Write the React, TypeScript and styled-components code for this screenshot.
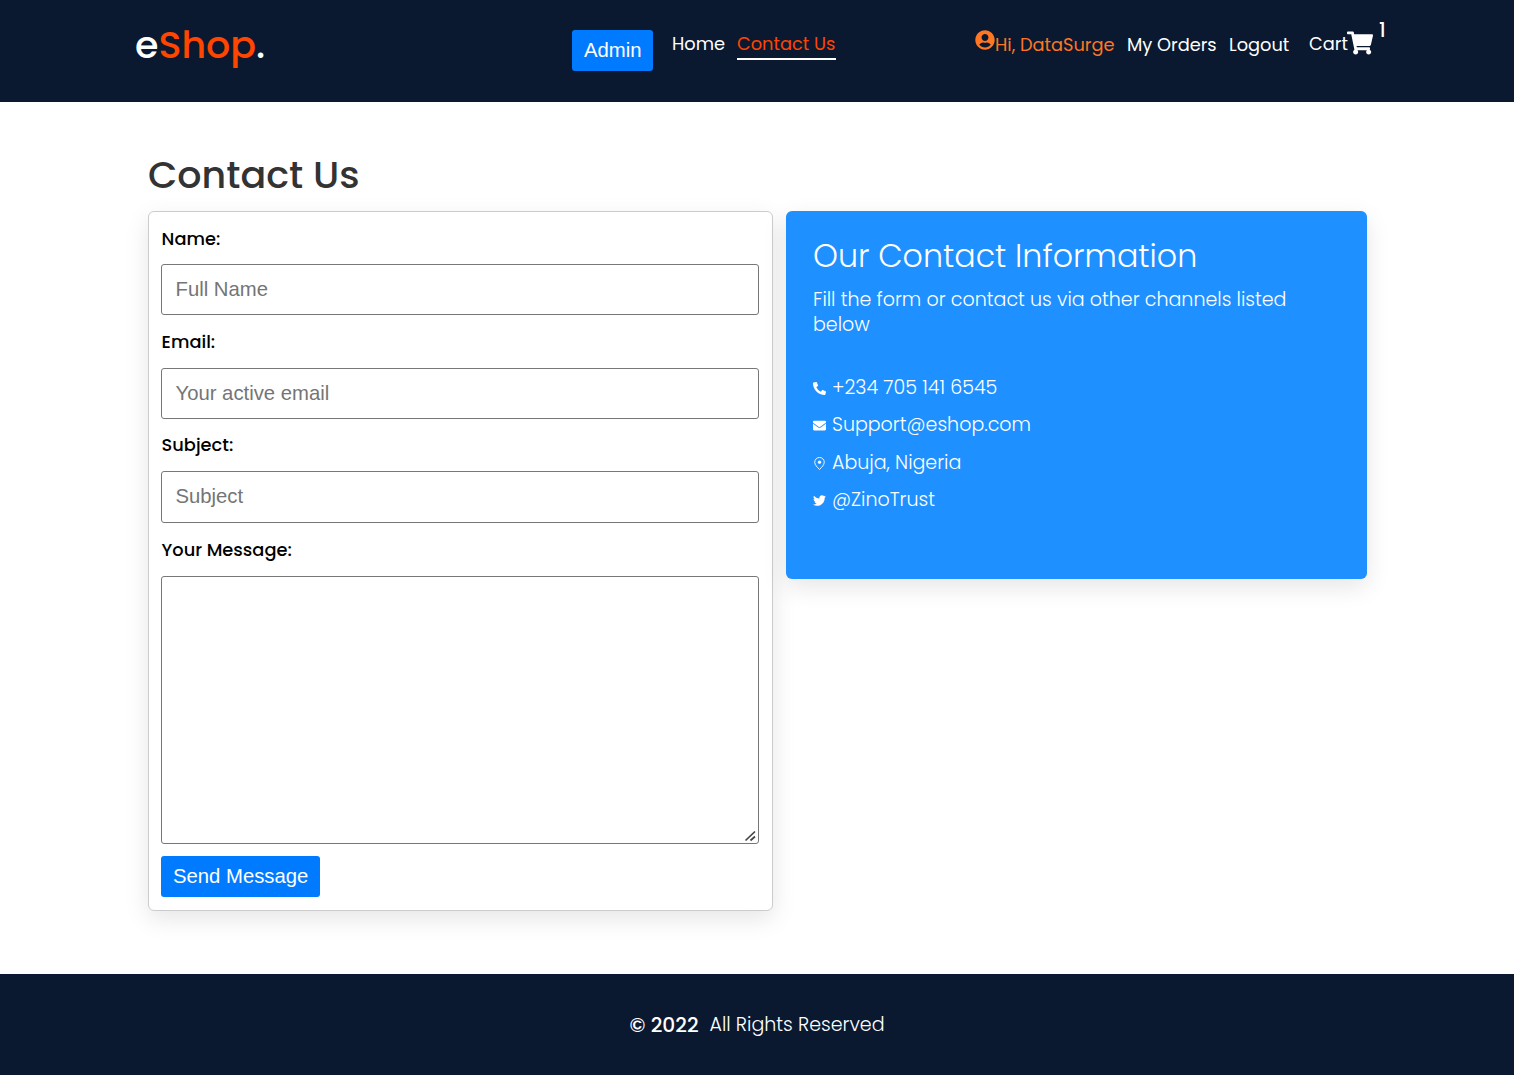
import React from "react";
import styled, { createGlobalStyle } from "styled-components";
import { FaShoppingCart, FaUserCircle, FaPhoneAlt, FaEnvelope, FaTwitter } from "react-icons/fa";

const GlobalStyle = createGlobalStyle`
  *, *::before, *::after { box-sizing: border-box; margin: 0; padding: 0; }
  body { margin: 0; background: #fff; font-family: Poppins, Inter, "Open Sans", sans-serif; }
  a { color: inherit; text-decoration: none; }
`;

const Page = styled.div`
  display: flex;
  flex-direction: column;
  height: 1075px;
`;

const Header = styled.header`
  display: flex;
  align-items: flex-start;
  height: 102px;
  padding: 20px 128px 0 135px;
  background: #0a1930;
  color: #fff;
  flex: none;
`;

const Label = styled.span<{ $size: number; $weight?: number }>`
  font-size: ${(p) => p.$size}px;
  font-weight: ${(p) => p.$weight ?? 400};
  white-space: nowrap;
`;

const Logo = styled.a`
  width: 437px;
  font-size: 38px;
  font-weight: 500;
  line-height: 49px;
  span { color: #ff4500; }
`;

const Button = styled.button`
  height: 41px;
  padding: 0 12px 1px;
  border: 0;
  border-radius: 3px;
  background: #007bff;
  color: #fff;
  font: 400 20.3px/39px "Liberation Sans", Arial, sans-serif;
  white-space: nowrap;
`;

const AdminButton = styled(Button)`
  width: 81px;
  margin: 10px 19px 0 0;
`;

const Nav = styled.nav`
  display: flex;
  gap: 13px;
  width: 303px;
  padding-top: 10px;
`;

const NavLink = styled.a<{ $width: number; $active?: boolean }>`
  width: ${(p) => p.$width}px;
  height: 30px;
  line-height: 28px;
  color: ${(p) => (p.$active ? "#ff4500" : "#fff")};
  border-bottom: 2px solid ${(p) => (p.$active ? "#fff" : "transparent")};
`;

const Account = styled.div`
  display: flex;
  align-items: flex-start;
`;

const AccountLink = styled.a<{ $width: number; $accent?: boolean }>`
  display: flex;
  width: ${(p) => p.$width}px;
  padding-top: 10px;
  line-height: 30px;
  color: ${(p) => (p.$accent ? "#ff7722" : "#fff")};
  svg { flex: none; }
`;

const CartLink = styled.a`
  display: flex;
  padding-top: 10px;
  line-height: 28px;
  svg { flex: none; }
`;

const CartText = styled.span`
  width: 38px;
`;

const CartCount = styled.span`
  margin: -10px 0 0 6px;
  line-height: 22px;
  font-size: 19px;
  font-weight: 500;
`;

const Main = styled.main`
  flex: 1;
  padding: 48px 147px 0 148px;
`;

const Title = styled.h2`
  height: 61px;
  line-height: 50px;
  font-size: 38px;
  font-weight: 500;
  color: #333;
`;

const Columns = styled.div`
  display: flex;
  align-items: flex-start;
  gap: 13px;
`;

const FormCard = styled.form`
  display: flex;
  flex-direction: column;
  align-items: flex-start;
  width: 625px;
  height: 700px;
  padding: 12px;
  background: #fff;
  border: 1px solid #ccc;
  border-radius: 6px;
  box-shadow: 0 8px 24px rgba(0, 0, 0, 0.1);
`;

const FieldLabel = styled.label<{ $height: number; $line?: number }>`
  height: ${(p) => p.$height}px;
  padding-left: 0.6px;
  line-height: ${(p) => p.$line ?? 30}px;
  font-size: 17.8px;
  font-weight: 500;
  color: #000;
`;

const Input = styled.input<{ $height: number }>`
  width: 598px;
  height: ${(p) => p.$height}px;
  margin-bottom: 12px;
  padding: 0 13.5px 1px;
  border: 1px solid #777;
  border-radius: 3px;
  font: 400 20.3px "Liberation Sans", Arial, sans-serif;
  &::placeholder { color: #757575; }
`;

const MessageBox = styled.div`
  position: relative;
  width: 598px;
  height: 268px;
  margin-bottom: 12px;
  flex: none;
`;

const TextArea = styled.textarea`
  display: block;
  width: 100%;
  height: 100%;
  border: 1px solid #777;
  border-radius: 3px;
  resize: none;
`;

const Grip = styled.svg`
  position: absolute;
  right: 3px;
  bottom: 2px;
  pointer-events: none;
`;

const InfoCard = styled.section`
  width: 581px;
  height: 368px;
  padding: 24px 27px;
  background: #1e90ff;
  color: #fff;
  border-radius: 6px;
  box-shadow: 0 8px 24px rgba(0, 0, 0, 0.1);
`;

const InfoTitle = styled.h3`
  line-height: 42px;
  font-size: 31.7px;
  font-weight: 300;
  white-space: nowrap;
`;

const InfoText = styled.p`
  margin: 10px 0 31.8px;
  line-height: 25px;
  font-size: 19.05px;
  font-weight: 300;
`;

const Channels = styled.div`
  display: flex;
  flex-direction: column;
`;

const Channel = styled.p`
  display: flex;
  align-items: center;
  gap: 6px;
  height: 37.4px;
  svg { position: relative; top: 1px; flex: none; }
`;

const Footer = styled.footer`
  display: flex;
  justify-content: center;
  gap: 11px;
  height: 101px;
  line-height: 101px;
  background: #0a1930;
  color: #fff;
  flex: none;
`;

const Copyright = styled(Label)`
  line-height: 102px;
`;

function PinIcon({ size }: { size: number }) {
  return (
    <svg width={size} height={size} viewBox="0 0 24 24" fill="none" stroke="currentColor" strokeWidth="1.7">
      <path d="M12 23C8 18.8 3.2 14.8 3.2 9.6a8.8 8.8 0 0 1 17.6 0C20.8 14.8 16 18.8 12 23z" />
      <circle cx="12" cy="9.5" r="3" fill="currentColor" stroke="none" />
    </svg>
  );
}

const fields = [
  { label: "Name:", hint: "Full Name", labelHeight: 40, line: 30, height: 51 },
  { label: "Email:", hint: "Your active email", labelHeight: 41, line: 30, height: 51 },
  { label: "Subject:", hint: "Subject", labelHeight: 40, line: 28, height: 52 },
];

const channels = [
  { Icon: FaPhoneAlt, text: "+234 705 141 6545" },
  { Icon: FaEnvelope, text: "Support@eshop.com" },
  { Icon: PinIcon, text: "Abuja, Nigeria" },
  { Icon: FaTwitter, text: "@ZinoTrust" },
];

export default function App() {
  return (
    <Page>
      <GlobalStyle />
      <Header>
        <Logo href="#">e<span>Shop</span>.</Logo>
        <AdminButton>Admin</AdminButton>
        <Nav>
          <NavLink href="#" $width={52}><Label $size={17.8}>Home</Label></NavLink>
          <NavLink href="#" $width={99} $active><Label $size={17.8}>Contact Us</Label></NavLink>
        </Nav>
        <Account>
          <AccountLink href="#" $width={152} $accent>
            <FaUserCircle size={20} />
            <Label $size={17.8}>Hi, DataSurge</Label>
          </AccountLink>
          <AccountLink href="#" $width={102}><Label $size={17.8}>My Orders</Label></AccountLink>
          <AccountLink href="#" $width={80}><Label $size={17.8}>Logout</Label></AccountLink>
          <CartLink href="#">
            <CartText><Label $size={17.8}>Cart</Label></CartText>
            <FaShoppingCart size={26} />
            <CartCount>1</CartCount>
          </CartLink>
        </Account>
      </Header>
      <Main>
        <Title>Contact Us</Title>
        <Columns>
          <FormCard>
            {fields.map((f) => (
              <React.Fragment key={f.label}>
                <FieldLabel $height={f.labelHeight} $line={f.line}>{f.label}</FieldLabel>
                <Input placeholder={f.hint} $height={f.height} />
              </React.Fragment>
            ))}
            <FieldLabel $height={41}>Your Message:</FieldLabel>
            <MessageBox>
              <TextArea />
              <Grip width="12" height="12" viewBox="0 0 12 12" stroke="#444" strokeWidth="1.7">
                <path d="M1.5 10.5L11 1.5M6.5 10.5L11 6.5" />
              </Grip>
            </MessageBox>
            <Button type="button">Send Message</Button>
          </FormCard>
          <InfoCard>
            <InfoTitle>Our Contact Information</InfoTitle>
            <InfoText>Fill the form or contact us via other channels listed below</InfoText>
            <Channels>
              {channels.map(({ Icon, text }) => (
                <Channel key={text}>
                  <Icon size={13} />
                  <Label $size={19.05} $weight={300}>{text}</Label>
                </Channel>
              ))}
            </Channels>
          </InfoCard>
        </Columns>
      </Main>
      <Footer>
        <Copyright $size={20.2} $weight={500}>© 2022</Copyright>
        <Label $size={19.05} $weight={300}>All Rights Reserved</Label>
      </Footer>
    </Page>
  );
}
